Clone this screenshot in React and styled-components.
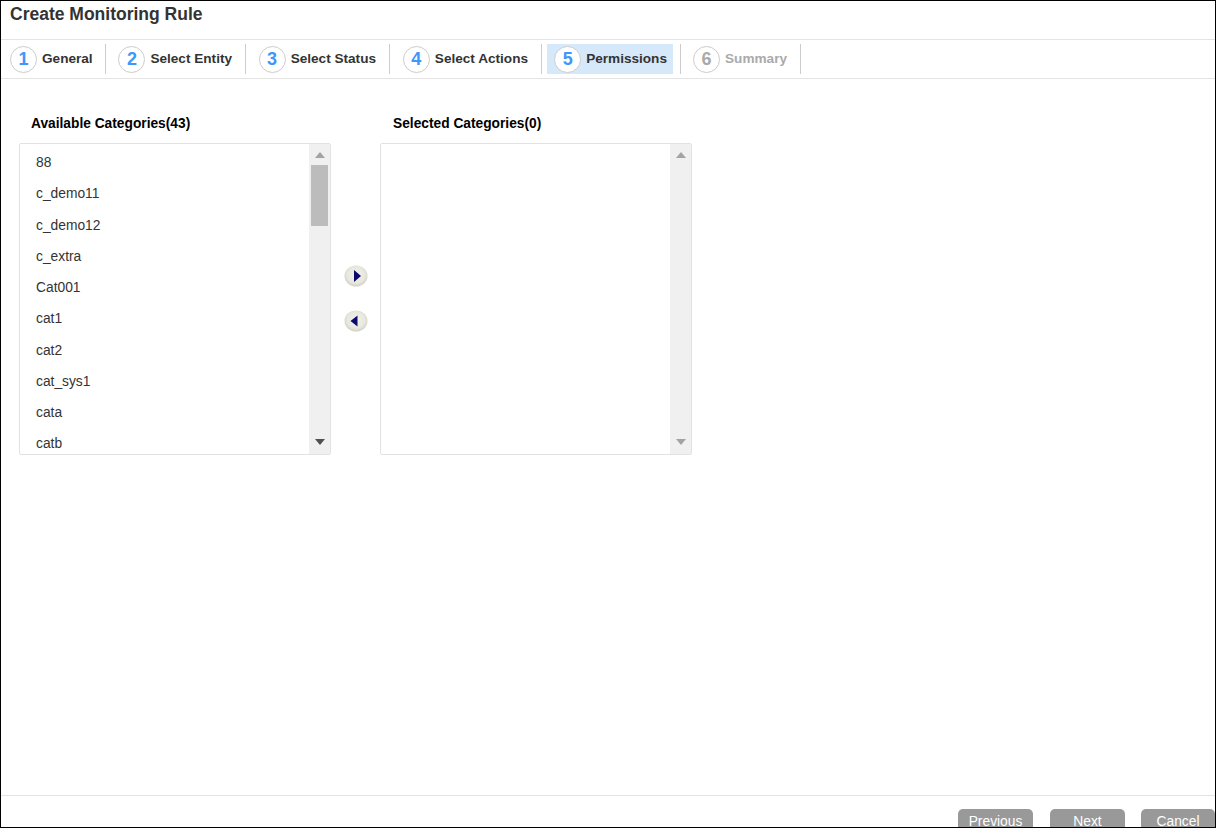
import React from "react";
import styled, { createGlobalStyle } from "styled-components";

const GlobalStyle = createGlobalStyle`
  html, body {
    margin: 0;
    padding: 0;
    background: #fff;
  }
  body {
    font-family: "Liberation Sans", Arial, sans-serif;
  }
`;

const steps = [
  { num: 1, label: "General", width: 105 },
  { num: 2, label: "Select Entity", width: 140 },
  { num: 3, label: "Select Status", width: 144 },
  { num: 4, label: "Select Actions", width: 152 },
  { num: 5, label: "Permissions", width: 139, active: true },
  { num: 6, label: "Summary", width: 120, disabled: true },
];

const categories = [
  "88",
  "c_demo11",
  "c_demo12",
  "c_extra",
  "Cat001",
  "cat1",
  "cat2",
  "cat_sys1",
  "cata",
  "catb",
];

const RoundArrow = ({ left }) => (
  <svg width="24" height="22" viewBox="0 0 24 22">
    <defs>
      <radialGradient id={left ? "gl" : "gr"} cx="50%" cy="45%" r="55%">
        <stop offset="0%" stopColor="#f2f2ea" />
        <stop offset="70%" stopColor="#e8e8de" />
        <stop offset="100%" stopColor="#d0d0c8" />
      </radialGradient>
    </defs>
    <ellipse cx="12" cy="11" rx="11.5" ry="10.5" fill={`url(#${left ? "gl" : "gr"})`} />
    <path d={left ? "M13.5 5.5 L13.5 16.5 L6.5 11 Z" : "M10 5 L10 17 L17 11 Z"} fill="#0a0a6e" />
  </svg>
);

const App = () => {
  return (
    <Page>
      <GlobalStyle />
      <Title>Create Monitoring Rule</Title>
      <StepBar>
        {steps.map((s) => (
          <StepCell key={s.num} $width={s.width}>
            <Step $active={s.active}>
              <StepNum $disabled={s.disabled}>{s.num}</StepNum>
              <StepLabel $disabled={s.disabled}>{s.label}</StepLabel>
            </Step>
          </StepCell>
        ))}
      </StepBar>
      <Content>
        <Column>
          <ListTitle $indent={12}>Available Categories(43)</ListTitle>
          <ListBox>
            <Items>
              {categories.map((c) => (
                <Item key={c}>{c}</Item>
              ))}
            </Items>
            <ScrollBar>
              <ScrollUp />
              <Thumb />
              <ScrollDown />
            </ScrollBar>
          </ListBox>
        </Column>
        <Arrows>
          <RoundArrow />
          <RoundArrow left />
        </Arrows>
        <Column>
          <ListTitle $indent={13}>Selected Categories(0)</ListTitle>
          <ListBox>
            <Items />
            <ScrollBar>
              <ScrollUp />
              <ScrollDown $muted />
            </ScrollBar>
          </ListBox>
        </Column>
      </Content>
      <Footer>
        <FooterButton $width={75} $gap={17}>Previous</FooterButton>
        <FooterButton $width={75} $gap={16}>Next</FooterButton>
        <FooterButton $width={74}>Cancel</FooterButton>
      </Footer>
    </Page>
  );
};

export default App;

const Page = styled.div`
  width: 1216px;
  height: 828px;
  box-sizing: border-box;
  border: 1px solid #000;
  display: flex;
  flex-direction: column;
  overflow: hidden;
  background: #fff;
`;

const Title = styled.div`
  height: 38px;
  box-sizing: border-box;
  padding: 3px 0 0 9px;
  font-size: 17.5px;
  line-height: 20px;
  font-weight: 700;
  color: #333;
`;

const StepBar = styled.div`
  height: 40px;
  box-sizing: border-box;
  border-top: 1px solid #e4e4e4;
  border-bottom: 1px solid #e4e4e4;
  display: flex;
  padding-top: 4px;
`;

const StepCell = styled.div`
  width: ${({ $width }) => $width}px;
  height: 30px;
  box-sizing: border-box;
  border-right: 1px solid #ccc;
  padding-right: 7px;
  display: flex;
  justify-content: flex-end;
  &:first-child {
    justify-content: flex-start;
    padding-left: 9px;
    > div {
      padding-left: 0;
    }
  }
`;

const Step = styled.div`
  display: flex;
  align-items: center;
  height: 30px;
  box-sizing: border-box;
  padding: 0 6px 0 ${({ $active }) => ($active ? 7 : 6)}px;
  background: ${({ $active }) => ($active ? "#d5e9fa" : "transparent")};
`;

const StepNum = styled.span`
  width: 25px;
  height: 25px;
  border: 1px solid #ccc;
  border-radius: 50%;
  background: #fff;
  color: ${({ $disabled }) => ($disabled ? "#aaa" : "#3f96fb")};
  font-size: 18px;
  font-weight: 700;
  line-height: 25px;
  text-align: center;
  margin-right: 5px;
`;

const StepLabel = styled.span`
  font-size: 13.6px;
  font-weight: 700;
  margin-bottom: 2px;
  color: ${({ $disabled }) => ($disabled ? "#aaa" : "#333")};
  white-space: nowrap;
`;

const Content = styled.div`
  flex: 1;
  display: flex;
  padding: 37px 0 0 18px;
`;

const Column = styled.div`
  width: 312px;
`;

const ListTitle = styled.div`
  height: 27px;
  padding-left: ${({ $indent }) => $indent}px;
  font-size: 13.75px;
  line-height: 16px;
  font-weight: 700;
  color: #000;
`;

const ListBox = styled.div`
  width: 312px;
  height: 312px;
  box-sizing: border-box;
  border: 1px solid #e2e2e2;
  border-radius: 2px;
  display: flex;
  overflow: hidden;
`;

const Items = styled.div`
  flex: 1;
  padding: 3px 0 0 16px;
`;

const Item = styled.div`
  height: 31.25px;
  font-size: 13.8px;
  line-height: 31px;
  color: #333;
`;

const ScrollBar = styled.div`
  width: 21px;
  background: #f0f0f0;
  display: flex;
  flex-direction: column;
  align-items: center;
  position: relative;
  padding-top: 8px;
  box-sizing: border-box;
`;

const ScrollUp = styled.div`
  width: 0;
  height: 0;
  border-left: 5px solid transparent;
  border-right: 5px solid transparent;
  border-bottom: 6px solid #a3a3a3;
`;

const Thumb = styled.div`
  width: 17px;
  height: 61px;
  margin-top: 7px;
  background: #bcbcbc;
`;

const ScrollDown = styled.div`
  width: 0;
  height: 0;
  border-left: 5px solid transparent;
  border-right: 5px solid transparent;
  border-top: 6px solid ${({ $muted }) => ($muted ? "#a3a3a3" : "#505050")};
  position: absolute;
  bottom: 9px;
`;

const Arrows = styled.div`
  width: 49px;
  display: flex;
  flex-direction: column;
  align-items: center;
  gap: 23px;
  padding-top: 149px;
  box-sizing: border-box;
`;

const Footer = styled.div`
  height: 32px;
  flex-shrink: 0;
  box-sizing: border-box;
  border-top: 1px solid #e4e4e4;
  display: flex;
  justify-content: flex-end;
  align-items: flex-start;
  padding-top: 13px;
`;

const FooterButton = styled.div`
  width: ${({ $width }) => $width}px;
  height: 26px;
  flex-shrink: 0;
  margin-right: ${({ $gap }) => $gap || 0}px;
  background: #999;
  border-radius: 5px 5px 0 0;
  color: #fff;
  font-size: 13.8px;
  line-height: 26px;
  text-align: center;
`;
